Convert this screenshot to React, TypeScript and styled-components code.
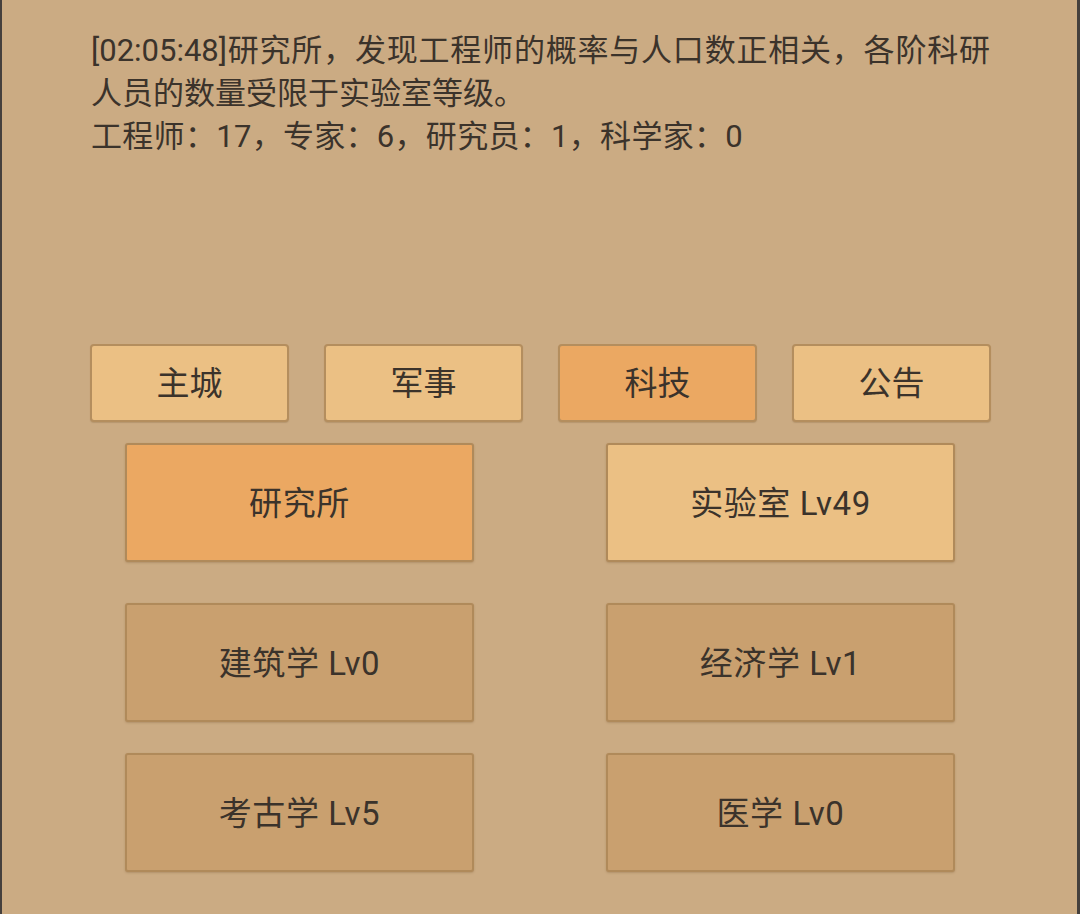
import styled, { createGlobalStyle } from "styled-components";

const GlobalStyle = createGlobalStyle`
  html, body {
    margin: 0;
    padding: 0;
    background: #cbab83;
  }
  * {
    box-sizing: border-box;
  }
`;

type Tone = "light" | "active" | "dim";

const tones: Record<Tone, string> = {
  light: "#ebc084",
  active: "#eba862",
  dim: "#c9a06f",
};

const tabs = [
  { label: "主城", tone: "light" as Tone },
  { label: "军事", tone: "light" as Tone },
  { label: "科技", tone: "active" as Tone },
  { label: "公告", tone: "light" as Tone },
];

const rows: { gap: number; items: { label: string; tone: Tone }[] }[] = [
  {
    gap: 21,
    items: [
      { label: "研究所", tone: "active" },
      { label: "实验室 Lv49", tone: "light" },
    ],
  },
  {
    gap: 41,
    items: [
      { label: "建筑学 Lv0", tone: "dim" },
      { label: "经济学 Lv1", tone: "dim" },
    ],
  },
  {
    gap: 31,
    items: [
      { label: "考古学 Lv5", tone: "dim" },
      { label: "医学 Lv0", tone: "dim" },
    ],
  },
];

export default function App() {
  return (
    <>
      <GlobalStyle />
      <Screen>
        <Log>
          <p>[02:05:48]研究所，发现工程师的概率与人口数正相关，各阶科研人员的数量受限于实验室等级。</p>
          <p>工程师：17，专家：6，研究员：1，科学家：0</p>
        </Log>

        <TabBar>
          {tabs.map((t) => (
            <Tab key={t.label} $tone={t.tone}>
              {t.label}
            </Tab>
          ))}
        </TabBar>

        {rows.map((row, i) => (
          <ButtonRow key={i} $gap={row.gap}>
            {row.items.map((b) => (
              <BigButton key={b.label} $tone={b.tone}>
                {b.label}
              </BigButton>
            ))}
          </ButtonRow>
        ))}
      </Screen>
    </>
  );
}

const Screen = styled.div`
  width: 1080px;
  height: 914px;
  background: #cbab83;
  border-left: 2px solid #45403d;
  border-right: 3px solid #45403d;
  font-family: Roboto, "Noto Sans CJK SC", sans-serif;
  color: #3b332b;
  overflow: hidden;
`;

const Log = styled.div`
  width: 988px;
  padding: 29px 0 0 89px;
  font-size: 31px;
  line-height: 43px;
  text-align: justify;

  p {
    margin: 0;
  }

  p + p {
    letter-spacing: 0.3px;
  }
`;

const TabBar = styled.div`
  display: grid;
  grid-template-columns: repeat(4, 199px);
  column-gap: 35px;
  margin: 186px 0 0 88px;
`;

const Tab = styled.div<{ $tone: Tone }>`
  height: 78px;
  display: flex;
  align-items: center;
  justify-content: center;
  padding-bottom: 4px;
  background: ${(p) => tones[p.$tone]};
  border: 2px solid #b48e5e;
  border-radius: 4px;
  font-size: 33px;
  box-shadow: 0 1px 1px rgba(120, 90, 50, 0.25);
`;

const ButtonRow = styled.div<{ $gap: number }>`
  display: grid;
  grid-template-columns: 349px 349px;
  column-gap: 132px;
  margin: ${(p) => p.$gap}px 0 0 123px;
`;

const BigButton = styled.div<{ $tone: Tone }>`
  height: 119px;
  display: flex;
  align-items: center;
  justify-content: center;
  padding-bottom: 4px;
  background: ${(p) => tones[p.$tone]};
  border: 2px solid #b08a5a;
  border-radius: 3px;
  font-size: 33px;
  letter-spacing: 0.6px;
  box-shadow: 0 1px 2px rgba(120, 90, 50, 0.3);
`;
